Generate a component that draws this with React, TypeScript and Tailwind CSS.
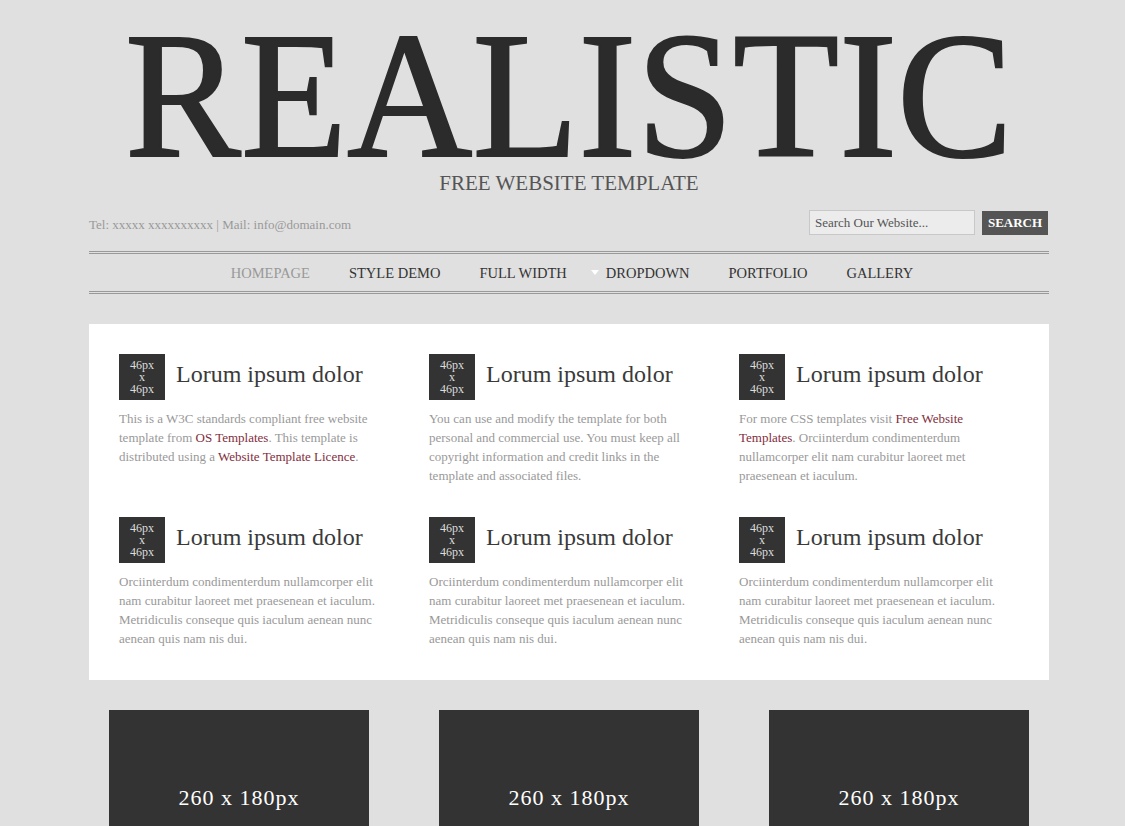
import React from "react";

const Link = ({ children }: { children: React.ReactNode }) => (
  <a href="#" className="text-[#822d3c]">{children}</a>
);

const items: React.ReactNode[] = [
  <>This is a W3C standards compliant free website template from <Link>OS Templates</Link>. This template is distributed using a <Link>Website Template Licence</Link>.</>,
  <>You can use and modify the template for both personal and commercial use. You must keep all copyright information and credit links in the template and associated files.</>,
  <>For more CSS templates visit <Link>Free Website Templates</Link>. Orciinterdum condimenterdum nullamcorper elit nam curabitur laoreet met praesenean et iaculum.</>,
  <>Orciinterdum condimenterdum nullamcorper elit nam curabitur laoreet met praesenean et iaculum. Metridiculis conseque quis iaculum aenean nunc aenean quis nam nis dui.</>,
  <>Orciinterdum condimenterdum nullamcorper elit nam curabitur laoreet met praesenean et iaculum. Metridiculis conseque quis iaculum aenean nunc aenean quis nam nis dui.</>,
  <>Orciinterdum condimenterdum nullamcorper elit nam curabitur laoreet met praesenean et iaculum. Metridiculis conseque quis iaculum aenean nunc aenean quis nam nis dui.</>,
];

const nav = ["HOMEPAGE", "STYLE DEMO", "FULL WIDTH", "DROPDOWN", "PORTFOLIO", "GALLERY"];

export default function App() {
  return (
    <div className="min-h-screen bg-[#e0e0e0] font-['Liberation_Serif',serif]">
      <div className="w-[960px] ml-[89px]">
        {/* Header */}
        <div className="pt-[20px] text-center">
          <h1 className="flex justify-center font-normal">
            <span className="block mt-[-14px] mb-[-16px] text-[180px] leading-[180px] text-[#2b2b2b] scale-x-[0.965] [-webkit-text-stroke:2px_#2b2b2b]">
              REALISTIC
            </span>
          </h1>
          <p className="mt-[3px] text-[21px] leading-[20px] text-[#555]">FREE WEBSITE TEMPLATE</p>
        </div>

        {/* Top bar */}
        <div className="mt-[18px] flex items-center justify-between h-[25px]">
          <p className="text-[13px] text-[#999] pt-[2px]">Tel: xxxxx xxxxxxxxxx | Mail: info@domain.com</p>
          <div className="flex items-center gap-[7px] pr-[1px] mt-[-2px]">
            <input
              type="text"
              placeholder="Search Our Website..."
              className="w-[166px] h-[25px] border border-[#c8c8c8] bg-[#ececec] px-[5px] text-[13px] text-[#555] placeholder:text-[#555] outline-none"
            />
            <button className="h-[24px] w-[66px] bg-[#555] text-white text-[13px] font-bold">SEARCH</button>
          </div>
        </div>

        {/* Nav */}
        <nav className="mt-[15px] border-y-[3px] border-double border-[#999]">
          <ul className="flex justify-center items-center gap-[39px] h-[37px] pl-[6px] pt-[2px] text-[14.5px]">
            {nav.map((n, i) => (
              <li key={n} className={`relative ${i === 0 ? "text-[#999]" : "text-[#333]"}`}>
                {n === "DROPDOWN" && (
                  <span className="absolute left-[-15px] top-[7px] w-0 h-0 border-x-[4px] border-t-[5px] border-x-transparent border-t-white" />
                )}
                {n}
              </li>
            ))}
          </ul>
        </nav>

        {/* Content panel */}
        <div className="mt-[30px] bg-white pl-[30px] pt-[30px] pb-[32px]">
          <div className="grid grid-cols-[290px_290px_290px] gap-x-[20px] gap-y-[32px]">
            {items.map((t, i) => (
              <div key={i}>
                <div className="flex items-start gap-[11px]">
                  <div className="w-[46px] h-[46px] bg-[#333] text-[#ddd] text-[12px] leading-[12px] flex flex-col items-center justify-center">
                    <span>46px</span>
                    <span>x</span>
                    <span>46px</span>
                  </div>
                  <h2 className="mt-[8px] text-[24px] leading-[24px] text-[#3a3a3a] font-normal">Lorum ipsum dolor</h2>
                </div>
                <p className="mt-[9px] w-[275px] text-[13px] leading-[19px] text-[#999]">{t}</p>
              </div>
            ))}
          </div>
        </div>

        {/* Bottom boxes */}
        <div className="mt-[30px] pl-[20px] flex gap-[70px] pb-[30px]">
          {[0, 1, 2].map((i) => (
            <div key={i} className="w-[260px] h-[180px] bg-[#333] flex items-center justify-center">
              <span className="text-white text-[22px] tracking-[1px] mt-[-6px]">260 x 180px</span>
            </div>
          ))}
        </div>
      </div>
    </div>
  );
}
